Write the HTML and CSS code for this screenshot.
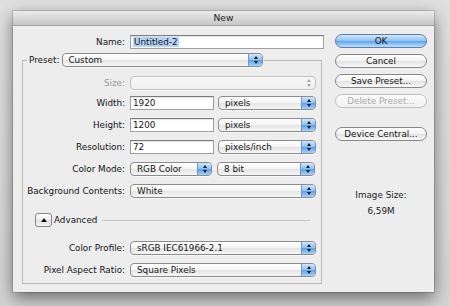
FILE: index.html
```html
<!DOCTYPE html>
<html lang="en">
<head>
  <meta charset="UTF-8" />
  <title>New</title>
  <link rel="stylesheet" href="styles.css">
</head>
<body>
  <div class="window">
    <div class="titlebar">New</div>
    <div class="content">
      <div class="main">
        <div class="row">
          <label class="lbl name-lbl">Name:</label>
          <div class="input name-input"><span class="picked">Untitled-2</span></div>
        </div>

        <fieldset class="preset">
          <legend>
            <div class="legend-row">
              <span>Preset:</span>
              <div class="select preset-select">Custom<span class="arrows"></span></div>
            </div>
          </legend>

          <div class="row size-row">
            <label class="lbl disabled">Size:</label>
            <div class="select full off"><span class="arrows"></span></div>
          </div>
          <div class="row width-row">
            <label class="lbl">Width:</label>
            <div class="input num">1920</div>
            <div class="select unit">pixels<span class="arrows"></span></div>
          </div>
          <div class="row gap-row">
            <label class="lbl">Height:</label>
            <div class="input num">1200</div>
            <div class="select unit">pixels<span class="arrows"></span></div>
          </div>
          <div class="row gap-row">
            <label class="lbl">Resolution:</label>
            <div class="input num">72</div>
            <div class="select unit">pixels/inch<span class="arrows"></span></div>
          </div>
          <div class="row gap-row">
            <label class="lbl">Color Mode:</label>
            <div class="select mode">RGB Color<span class="arrows"></span></div>
            <div class="select unit">8 bit<span class="arrows"></span></div>
          </div>
          <div class="row gap-row">
            <label class="lbl">Background Contents:</label>
            <div class="select full">White<span class="arrows"></span></div>
          </div>

          <div class="row advanced-row">
            <span class="adv-btn"><span class="tri"></span></span>
            <span class="adv-text">Advanced</span>
            <span class="adv-line"></span>
          </div>

          <div class="row profile-row">
            <label class="lbl">Color Profile:</label>
            <div class="select full">sRGB IEC61966-2.1<span class="arrows"></span></div>
          </div>
          <div class="row ratio-row">
            <label class="lbl">Pixel Aspect Ratio:</label>
            <div class="select full">Square Pixels<span class="arrows"></span></div>
          </div>
        </fieldset>
      </div>

      <div class="side">
        <div class="btn ok">OK</div>
        <div class="btn">Cancel</div>
        <div class="btn">Save Preset...</div>
        <div class="btn off">Delete Preset...</div>
        <div class="btn device">Device Central...</div>
        <div class="image-size">
          <div>Image Size:</div>
          <div class="size-val">6,59M</div>
        </div>
      </div>
    </div>
  </div>
</body>
</html>
```

FILE: styles.css
```css
* {
  box-sizing: border-box;
}
body {
  margin: 0;
  height: 306px;
  overflow: hidden;
  background: linear-gradient(#e0e0e0, #d4d4d4);
  font-family: 'DejaVu Sans', 'Liberation Sans', sans-serif;
  font-size: 8.8px;
  color: #141414;
}
.window {
  margin: 11px 0 0 13px;
  width: 421px;
  height: 281px;
  background: #ededed;
  box-shadow: 0 6px 16px rgba(0, 0, 0, 0.5), 0 0 0 1px rgba(0, 0, 0, 0.14);
}
.titlebar {
  height: 15px;
  line-height: 14px;
  text-align: center;
  background: linear-gradient(#ebebeb, #c6c6c6);
  border-bottom: 1px solid #a3a3a3;
  color: #1a1a1a;
  font-size: 9.2px;
}
.content {
  display: flex;
  gap: 11px;
  padding: 9px 7px 0 9px;
}
.main {
  width: 302px;
}
.row {
  display: flex;
  align-items: center;
  height: 14px;
  gap: 5px;
}
.lbl {
  flex: none;
  width: 102px;
  text-align: right;
}
.name-lbl {
  width: 103px;
}
.disabled {
  color: #9a9a9a;
}

/* text fields */
.input {
  height: 14px;
  line-height: 12px;
  padding-left: 2px;
  background: #fff;
  border: 1px solid #a0a0a0;
  border-top-color: #7c7c7c;
  box-shadow: inset 0 1px 1px rgba(0, 0, 0, 0.12);
}
.name-input {
  width: 194px;
}
.picked {
  background: #b6d3f7;
  padding: 0 1px;
}
.num {
  width: 84px;
}

/* popup menus */
.select {
  display: flex;
  align-items: center;
  height: 14px;
  padding-left: 6px;
  border: 1px solid #8c8c8c;
  border-radius: 4px;
  background: linear-gradient(#ffffff, #f4f4f4 50%, #e4e4e4 52%, #f6f6f6);
  box-shadow: 0 1px 0 rgba(255, 255, 255, 0.6);
}
.arrows {
  margin-left: auto;
  width: 14px;
  height: 12px;
  display: flex;
  flex-direction: column;
  align-items: center;
  justify-content: center;
  gap: 2px;
  border-left: 1px solid #6f95c4;
  border-radius: 0 3px 3px 0;
  background: linear-gradient(#d0e6fc, #8dbff2 50%, #5b9fe9 52%, #a9d3fb);
}
.arrows::before,
.arrows::after {
  content: '';
  width: 0;
  height: 0;
  border-left: 2px solid transparent;
  border-right: 2px solid transparent;
}
.arrows::before {
  border-bottom: 3px solid #1a1a1a;
}
.arrows::after {
  border-top: 3px solid #1a1a1a;
}
.select.off {
  border-color: #c2c2c2;
  background: linear-gradient(#f7f7f7, #efefef);
}
.select.off .arrows {
  background: transparent;
  border-left-color: transparent;
}
.select.off .arrows::before {
  border-bottom-color: #a5a5a5;
}
.select.off .arrows::after {
  border-top-color: #a5a5a5;
}
.full {
  width: 186px;
}
.unit {
  width: 98px;
  margin-left: -1px;
}
.mode {
  width: 82px;
  margin-right: 1px;
}
.preset-select {
  width: 201px;
  padding-left: 5px;
}

/* preset group */
.preset {
  margin: 4px 0 0;
  padding: 0 0 6px;
  width: 300px;
  min-width: 0;
  border: 1px solid #b9b9b9;
}
.preset legend {
  margin-left: 4px;
  padding: 0 1px 0 2px;
}
.legend-row {
  display: flex;
  align-items: center;
  gap: 3px;
}
.size-row {
  margin-top: 9px;
}
.width-row {
  margin-top: 6px;
}
.gap-row {
  margin-top: 8px;
}
.advanced-row {
  margin-top: 15px;
  gap: 0;
  padding: 0 11px 0 12px;
}
.adv-btn {
  width: 17px;
  height: 14px;
  display: flex;
  align-items: center;
  justify-content: center;
  border: 1px solid #858585;
  border-radius: 3px;
  background: linear-gradient(#ffffff, #ececec 50%, #dedede 52%, #f5f5f5);
}
.tri {
  width: 0;
  height: 0;
  border-left: 3px solid transparent;
  border-right: 3px solid transparent;
  border-bottom: 4px solid #111;
}
.adv-text {
  margin-left: 2px;
}
.adv-line {
  flex: 1;
  height: 1px;
  margin-left: 5px;
  background: #c4c4c4;
}
.profile-row {
  margin-top: 14px;
}
.ratio-row {
  margin-top: 7px;
  height: 15px;
}

/* buttons column */
.side {
  width: 92px;
  margin-top: -1px;
  display: flex;
  flex-direction: column;
  gap: 6px;
}
.btn {
  height: 14px;
  line-height: 12px;
  text-align: center;
  border: 1px solid #878787;
  border-radius: 7px;
  background: linear-gradient(#ffffff, #f3f3f3 50%, #e2e2e2 52%, #fafafa);
  color: #141414;
}
.btn.ok {
  border-color: #5a7eae;
  background: linear-gradient(#d3e8fc, #8fc0f3 50%, #61a4ec 52%, #bfe0fc);
}
.btn.off {
  color: #a9a9a9;
  border-color: #c0c0c0;
  background: linear-gradient(#fbfbfb, #f1f1f1);
}
.btn.device {
  margin-top: 13px;
}
.image-size {
  margin-top: 43px;
  text-align: center;
  color: #222;
}
.size-val {
  margin-top: 6px;
}
```
